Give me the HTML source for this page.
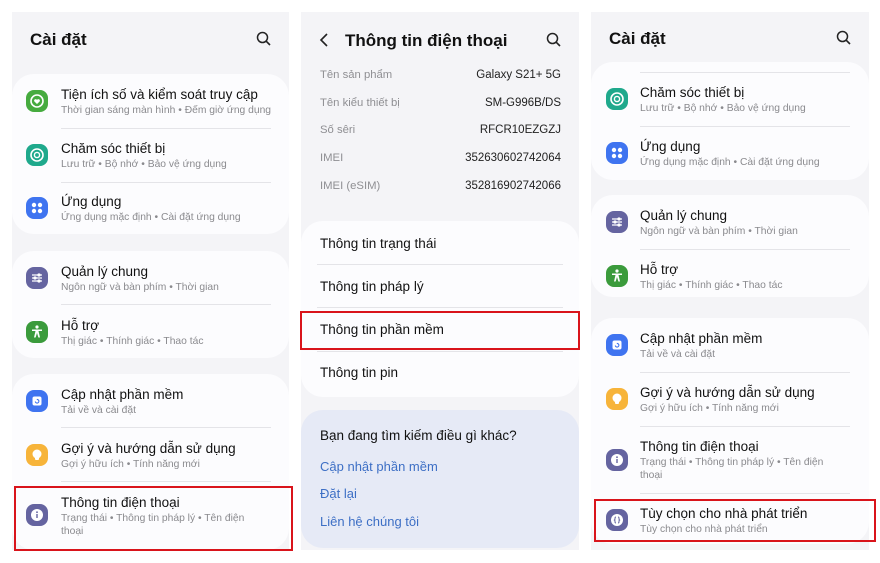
<!DOCTYPE html>
<html><head><meta charset="utf-8"><style>
*{margin:0;padding:0;box-sizing:border-box}
body{width:880px;height:563px;background:#fff;position:relative;overflow:hidden;font-family:"Liberation Sans","Noto Sans CJK SC",sans-serif;color:#111}
.p{position:absolute;top:12px;height:538px;background:#f4f4f7}
.c{position:absolute;background:#fcfcfe;border-radius:22px}
.a{position:absolute;white-space:nowrap}
.t{font-size:13.5px;color:#111}
.s{font-size:10.3px;color:#8a8a8e}
.h{font-size:17px;font-weight:bold;color:#111}
.sep{position:absolute;height:1px;background:#e4e4e8}
.ic{position:absolute;width:22px;height:22px;border-radius:8px}
.ic svg{position:absolute;left:0;top:0}
.r{position:absolute;border:2.5px solid #d9141b}
.lab{font-size:11.3px;color:#8f8f93}
.val{font-size:11.5px;color:#222;text-align:right}
.lk{font-size:13px;color:#3d6fc5}
</style></head><body>
<svg width="0" height="0" style="position:absolute">
<defs>
<g id="dw"><circle cx="11" cy="11" r="6" fill="none" stroke="#fff" stroke-width="1.6"/><path d="M11 14l-2.6-2.5a1.4 1.4 0 0 1 2.6-1.6a1.4 1.4 0 0 1 2.6 1.6z" fill="#fff"/></g>
<g id="dc"><circle cx="11" cy="11" r="6" fill="none" stroke="#fff" stroke-width="1.6"/><circle cx="11" cy="11" r="2.6" fill="none" stroke="#fff" stroke-width="1.4"/></g>
<g id="ap" fill="#fff"><circle cx="8" cy="8" r="2.2"/><circle cx="14" cy="8" r="2.2"/><circle cx="8" cy="14" r="2.2"/><circle cx="14" cy="14" r="2.2"/></g>
<g id="gm" stroke="#fff" stroke-width="1.3"><path d="M6 8h10M6 11h10M6 14h10"/><circle cx="13" cy="8" r="1" fill="#fff"/><circle cx="9" cy="11" r="1" fill="#fff"/><circle cx="13" cy="14" r="1" fill="#fff"/></g>
<g id="ac" fill="#fff"><circle cx="11" cy="6" r="1.6"/><path d="M6 8.5h10v1.5h-3.5l1.5 6.5h-1.6l-1.4-4.5l-1.4 4.5h-1.6l1.5-6.5h-3.5z"/></g>
<g id="up"><rect x="6.5" y="6.5" width="9" height="9" rx="2" fill="#fff"/><path d="M9.3 11.5a1.8 1.8 0 1 0 1.5-2" fill="none" stroke="#3f74f0" stroke-width="1.1"/></g>
<g id="tp" fill="#fff"><circle cx="11" cy="10" r="4.5"/><rect x="9" y="13" width="4" height="3" rx="1"/></g>
<g id="in"><circle cx="11" cy="11" r="6" fill="#fff"/><rect x="10.3" y="10" width="1.4" height="4" fill="#6564a0"/><circle cx="11" cy="8.2" r=".9" fill="#6564a0"/></g>
<g id="dv"><circle cx="11" cy="11" r="6" fill="#fff"/><path d="M10 8c-1.3 0-1 1.5-1 2s-.6 1-.6 1s.6.3.6 1s-.3 2 1 2M12 8c1.3 0 1 1.5 1 2s.6 1 .6 1s-.6.3-.6 1s.3 2-1 2" fill="none" stroke="#6564a0" stroke-width="1"/></g>
</defs></svg>

<!-- panel 1 -->
<div class="p" style="left:12px;width:277px"></div>
<div class="a h" style="left:30px;top:30px">Cài đặt</div>
<svg class="a" style="left:256px;top:31px" width="16" height="16" viewBox="0 0 16 16"><circle cx="6.5" cy="6.5" r="5" fill="none" stroke="#222" stroke-width="1.5"/><path d="M10.3 10.3L14 14" stroke="#222" stroke-width="1.6"/></svg>
<div class="c" style="left:12px;top:74px;width:277px;height:160px"></div>
<div class="c" style="left:12px;top:251px;width:277px;height:107px"></div>
<div class="c" style="left:12px;top:374px;width:277px;height:176px"></div>

<div class="ic" style="left:26px;top:90px;background:#46ab3f"><svg width="22" height="22"><use href="#dw"/></svg></div>
<div class="a t" style="left:61px;top:87px">Tiện ích số và kiểm soát truy cập</div>
<div class="a s" style="left:61px;top:105px">Thời gian sáng màn hình • Đếm giờ ứng dụng</div>
<div class="sep" style="left:61px;top:128px;width:210px"></div>
<div class="ic" style="left:26px;top:144px;background:#1fa98c"><svg width="22" height="22"><use href="#dc"/></svg></div>
<div class="a t" style="left:61px;top:141px">Chăm sóc thiết bị</div>
<div class="a s" style="left:61px;top:159px">Lưu trữ • Bộ nhớ • Bảo vệ ứng dụng</div>
<div class="sep" style="left:61px;top:182px;width:210px"></div>
<div class="ic" style="left:26px;top:197px;background:#3f74f0"><svg width="22" height="22"><use href="#ap"/></svg></div>
<div class="a t" style="left:61px;top:194px">Ứng dụng</div>
<div class="a s" style="left:61px;top:212px">Ứng dụng mặc định • Cài đặt ứng dụng</div>

<div class="ic" style="left:26px;top:267px;background:#6564a0"><svg width="22" height="22"><use href="#gm"/></svg></div>
<div class="a t" style="left:61px;top:264px">Quản lý chung</div>
<div class="a s" style="left:61px;top:282px">Ngôn ngữ và bàn phím • Thời gian</div>
<div class="sep" style="left:61px;top:304px;width:210px"></div>
<div class="ic" style="left:26px;top:321px;background:#3b9b3c"><svg width="22" height="22"><use href="#ac"/></svg></div>
<div class="a t" style="left:61px;top:318px">Hỗ trợ</div>
<div class="a s" style="left:61px;top:336px">Thị giác • Thính giác • Thao tác</div>

<div class="ic" style="left:26px;top:390px;background:#3f74f0"><svg width="22" height="22"><use href="#up"/></svg></div>
<div class="a t" style="left:61px;top:387px">Cập nhật phần mềm</div>
<div class="a s" style="left:61px;top:405px">Tải về và cài đặt</div>
<div class="sep" style="left:61px;top:427px;width:210px"></div>
<div class="ic" style="left:26px;top:444px;background:#f7b43a"><svg width="22" height="22"><use href="#tp"/></svg></div>
<div class="a t" style="left:61px;top:441px">Gợi ý và hướng dẫn sử dụng</div>
<div class="a s" style="left:61px;top:459px">Gợi ý hữu ích • Tính năng mới</div>
<div class="sep" style="left:61px;top:481px;width:210px"></div>
<div class="ic" style="left:26px;top:504px;background:#6564a0"><svg width="22" height="22"><use href="#in"/></svg></div>
<div class="a t" style="left:61px;top:495px">Thông tin điện thoại</div>
<div class="a s" style="left:61px;top:513px">Trạng thái • Thông tin pháp lý • Tên điện</div>
<div class="a s" style="left:61px;top:526px">thoại</div>
<div class="r" style="left:14px;top:486px;width:279px;height:65px"></div>

<!-- panel 2 -->
<div class="p" style="left:301px;width:278px"></div>
<svg class="a" style="left:318px;top:32px" width="12" height="16" viewBox="0 0 12 16"><path d="M9 2L3 8l6 6" fill="none" stroke="#222" stroke-width="1.6"/></svg>
<div class="a h" style="left:345px;top:31px">Thông tin điện thoại</div>
<svg class="a" style="left:546px;top:32px" width="16" height="16" viewBox="0 0 16 16"><circle cx="6.5" cy="6.5" r="5" fill="none" stroke="#222" stroke-width="1.5"/><path d="M10.3 10.3L14 14" stroke="#222" stroke-width="1.6"/></svg>
<div class="a lab" style="left:320px;top:69px">Tên sản phẩm</div><div class="a val" style="right:319px;top:69px">Galaxy S21+ 5G</div>
<div class="a lab" style="left:320px;top:97px">Tên kiểu thiết bị</div><div class="a val" style="right:319px;top:97px">SM-G996B/DS</div>
<div class="a lab" style="left:320px;top:124px">Số sêri</div><div class="a val" style="right:319px;top:124px">RFCR10EZGZJ</div>
<div class="a lab" style="left:320px;top:152px">IMEI</div><div class="a val" style="right:319px;top:152px">352630602742064</div>
<div class="a lab" style="left:320px;top:180px">IMEI (eSIM)</div><div class="a val" style="right:319px;top:180px">352816902742066</div>
<div class="c" style="left:301px;top:221px;width:278px;height:176px"></div>
<div class="a t" style="left:320px;top:236px">Thông tin trạng thái</div>
<div class="sep" style="left:317px;top:264px;width:246px"></div>
<div class="a t" style="left:320px;top:279px">Thông tin pháp lý</div>
<div class="sep" style="left:317px;top:307px;width:246px"></div>
<div class="a t" style="left:320px;top:322px">Thông tin phần mềm</div>
<div class="sep" style="left:317px;top:351px;width:246px"></div>
<div class="a t" style="left:320px;top:365px">Thông tin pin</div>
<div class="r" style="left:300px;top:311px;width:280px;height:39px"></div>
<div class="c" style="left:301px;top:410px;width:278px;height:138px;background:#e6eaf6"></div>
<div class="a t" style="left:320px;top:428px">Bạn đang tìm kiếm điều gì khác?</div>
<div class="a lk" style="left:320px;top:459px">Cập nhật phần mềm</div>
<div class="a lk" style="left:320px;top:486px">Đặt lại</div>
<div class="a lk" style="left:320px;top:514px">Liên hệ chúng tôi</div>

<!-- panel 3 -->
<div class="p" style="left:591px;width:278px"></div>
<div class="a h" style="left:609px;top:29px">Cài đặt</div>
<svg class="a" style="left:836px;top:30px" width="16" height="16" viewBox="0 0 16 16"><circle cx="6.5" cy="6.5" r="5" fill="none" stroke="#222" stroke-width="1.5"/><path d="M10.3 10.3L14 14" stroke="#222" stroke-width="1.6"/></svg>
<div class="c" style="left:591px;top:62px;width:278px;height:118px"></div>
<div class="sep" style="left:640px;top:72px;width:210px"></div>
<div class="ic" style="left:606px;top:88px;background:#1fa98c"><svg width="22" height="22"><use href="#dc"/></svg></div>
<div class="a t" style="left:640px;top:85px">Chăm sóc thiết bị</div>
<div class="a s" style="left:640px;top:103px">Lưu trữ • Bộ nhớ • Bảo vệ ứng dụng</div>
<div class="sep" style="left:640px;top:126px;width:210px"></div>
<div class="ic" style="left:606px;top:142px;background:#3f74f0"><svg width="22" height="22"><use href="#ap"/></svg></div>
<div class="a t" style="left:640px;top:139px">Ứng dụng</div>
<div class="a s" style="left:640px;top:157px">Ứng dụng mặc định • Cài đặt ứng dụng</div>
<div class="c" style="left:591px;top:195px;width:278px;height:102px"></div>
<div class="ic" style="left:606px;top:211px;background:#6564a0"><svg width="22" height="22"><use href="#gm"/></svg></div>
<div class="a t" style="left:640px;top:208px">Quản lý chung</div>
<div class="a s" style="left:640px;top:226px">Ngôn ngữ và bàn phím • Thời gian</div>
<div class="sep" style="left:640px;top:249px;width:210px"></div>
<div class="ic" style="left:606px;top:265px;background:#3b9b3c"><svg width="22" height="22"><use href="#ac"/></svg></div>
<div class="a t" style="left:640px;top:262px">Hỗ trợ</div>
<div class="a s" style="left:640px;top:280px">Thị giác • Thính giác • Thao tác</div>
<div class="c" style="left:591px;top:318px;width:278px;height:226px"></div>
<div class="ic" style="left:606px;top:334px;background:#3f74f0"><svg width="22" height="22"><use href="#up"/></svg></div>
<div class="a t" style="left:640px;top:331px">Cập nhật phần mềm</div>
<div class="a s" style="left:640px;top:349px">Tải về và cài đặt</div>
<div class="sep" style="left:640px;top:372px;width:210px"></div>
<div class="ic" style="left:606px;top:388px;background:#f7b43a"><svg width="22" height="22"><use href="#tp"/></svg></div>
<div class="a t" style="left:640px;top:385px">Gợi ý và hướng dẫn sử dụng</div>
<div class="a s" style="left:640px;top:403px">Gợi ý hữu ích • Tính năng mới</div>
<div class="sep" style="left:640px;top:426px;width:210px"></div>
<div class="ic" style="left:606px;top:449px;background:#6564a0"><svg width="22" height="22"><use href="#in"/></svg></div>
<div class="a t" style="left:640px;top:439px">Thông tin điện thoại</div>
<div class="a s" style="left:640px;top:457px">Trạng thái • Thông tin pháp lý • Tên điện</div>
<div class="a s" style="left:640px;top:470px">thoại</div>
<div class="sep" style="left:640px;top:493px;width:210px"></div>
<div class="ic" style="left:606px;top:509px;background:#6564a0"><svg width="22" height="22"><use href="#dv"/></svg></div>
<div class="a t" style="left:640px;top:506px">Tùy chọn cho nhà phát triển</div>
<div class="a s" style="left:640px;top:524px">Tùy chọn cho nhà phát triển</div>
<div class="r" style="left:594px;top:499px;width:282px;height:43px"></div>
</body></html>
